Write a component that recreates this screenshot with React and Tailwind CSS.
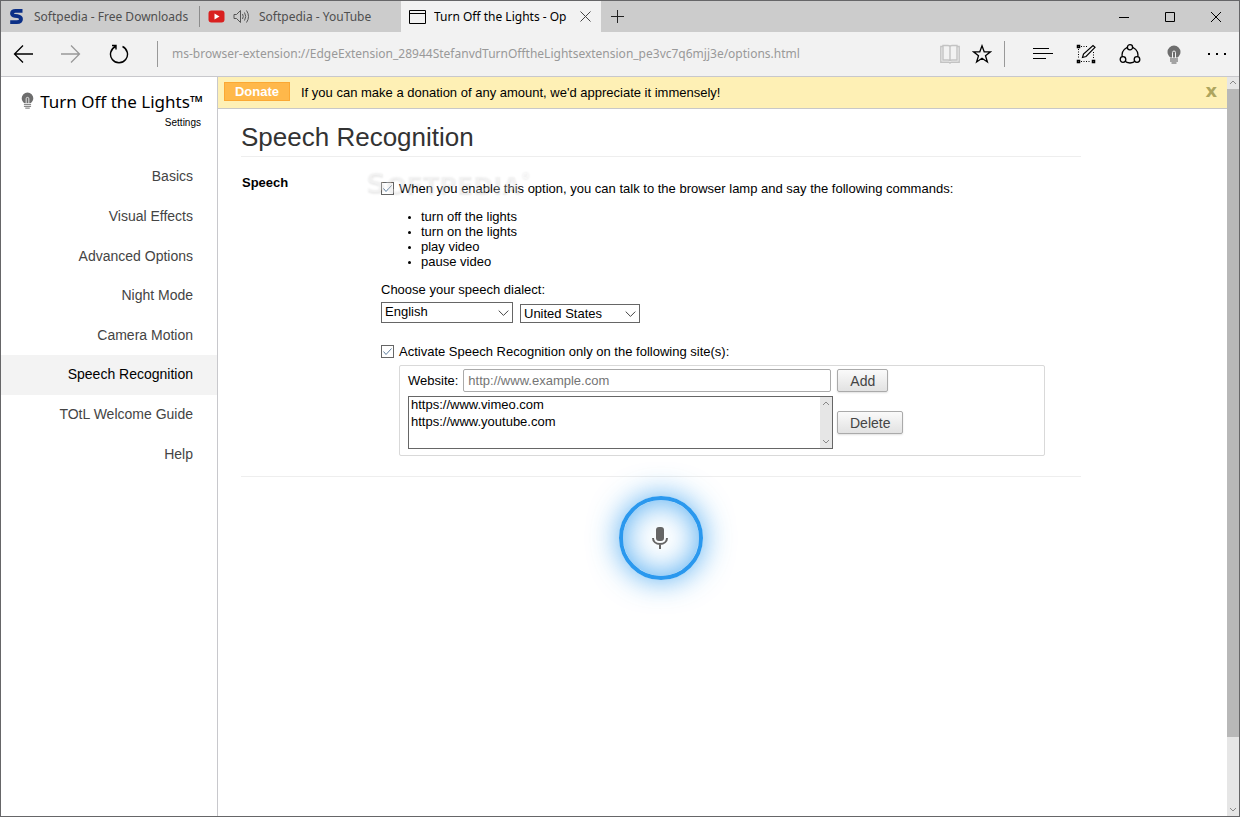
import React, { useState } from "react";

const navItems = [
  "Basics",
  "Visual Effects",
  "Advanced Options",
  "Night Mode",
  "Camera Motion",
  "Speech Recognition",
  "TOtL Welcome Guide",
  "Help",
];

const commands = ["turn off the lights", "turn on the lights", "play video", "pause video"];

function Bulb({ className }) {
  return (
    <svg viewBox="0 0 14 19" className={className} aria-hidden="true">
      <path d="M7 .5a6.5 6.5 0 0 0-6.5 6.5c0 2.300 1.300 4.200 3 5.500h7c1.700-1.300 3-3.200 3-5.500A6.500 6.500 0 0 0 7 .5z" fill="#6e6e6e" />
      <path d="M5.500 13V7.500a1.500 1.500 0 0 1 3 0V13" fill="none" stroke="#f2f2f2" />
      <path d="M3 14h8M3 16h8M4.500 18h5" stroke="#8a8a8a" strokeWidth="1.300" />
    </svg>
  );
}

function Chevron({ up, className }) {
  return (
    <svg viewBox="0 0 8 5" className={className} fill="none" stroke="currentColor" aria-hidden="true">
      <path d={up ? "M1 4l3-3 3 3" : "M1 1l3 3 3-3"} vectorEffect="non-scaling-stroke" />
    </svg>
  );
}

// Tab strip with the window controls on the right
function TabStrip() {
  return (
    <div className="flex h-[31px] shrink-0 bg-[#cccccc] text-[12px] text-[#4f4f4f]">
      <div className="flex w-[198px] items-center pl-2">
        <svg width="15" height="17" viewBox="0 0 15 17" className="mr-[10px] shrink-0">
          <path d="M13.500 2.800H6.500C4 2.800 3 3.800 3 5.200c0 1.700 1.100 2.300 3 2.600l2.500.4c2.200.4 3.500 1 3.500 2.800 0 2.200-1.600 3.200-4.200 3.200H1.200" fill="none" stroke="#0b2f86" strokeWidth="3.800" />
        </svg>
        <span className="w-[158px] overflow-hidden whitespace-nowrap">Softpedia - Free Downloads</span>
      </div>
      <div className="my-[5px] w-px bg-[#8c8c8c]" />
      <div className="flex w-[201px] items-center pl-2">
        <svg width="17" height="13" viewBox="0 0 17 13" className="mr-2 shrink-0">
          <rect x=".5" y=".5" width="16" height="12" rx="3" fill="#d9201f" />
          <path d="M6.500 3.500v6l5-3z" fill="#fff" />
        </svg>
        <svg width="18" height="15" viewBox="0 0 18 15" className="mr-2 shrink-0" fill="none" stroke="#555">
          <path d="M1 5.500h2.500l4-4v12l-4-4H1zM9.500 5q1.500 2.500 0 5M11.500 3.500q2.500 4 0 8M13.500 1.500q4 6 0 12" />
        </svg>
        <span className="whitespace-nowrap">Softpedia - YouTube</span>
      </div>
      <div className="flex w-[200px] items-center bg-[#f2f2f2] pl-2 text-black">
        <svg width="17" height="14" viewBox="0 0 17 14" className="mr-2 shrink-0" fill="none" stroke="#000">
          <path d="M1 .5h15.500v13H.5V.5zM.5 3.500h16" />
        </svg>
        <span className="w-[136px] overflow-hidden whitespace-nowrap">Turn Off the Lights - Op</span>
        <button aria-label="Close tab" className="ml-[10px]">
          <svg width="11" height="11" viewBox="0 0 11 11" stroke="#444">
            <path d="M.5.5l10 10M10.500.5l-10 10" />
          </svg>
        </button>
      </div>
      <button aria-label="New tab" className="ml-[10px]">
        <svg width="13" height="13" viewBox="0 0 13 13" stroke="#222">
          <path d="M6.500 0v13M0 6.500h13" />
        </svg>
      </button>
      <div className="ml-auto flex items-center gap-9 pr-[18px]">
        <button aria-label="Minimize">
          <svg width="10" height="10" viewBox="0 0 10 10" stroke="#000"><path d="M0 5.500h10" /></svg>
        </button>
        <button aria-label="Maximize">
          <svg width="10" height="10" viewBox="0 0 10 10" stroke="#000" fill="none"><path d="M.5.5h9v9h-9z" /></svg>
        </button>
        <button aria-label="Close">
          <svg width="10" height="10" viewBox="0 0 10 10" stroke="#000"><path d="M0 0l10 10M10 0L0 10" /></svg>
        </button>
      </div>
    </div>
  );
}

function Toolbar() {
  return (
    <div className="flex h-[45px] shrink-0 items-center border-b border-[#c8c8cc] bg-[#f2f2f2] pl-3">
      <button aria-label="Back" className="mr-7">
        <svg width="20" height="20" viewBox="0 0 20 20" fill="none" stroke="#000" strokeWidth="1.300">
          <path d="M10 1.500L1.500 10l8.500 8.500M1.500 10H20" />
        </svg>
      </button>
      <button aria-label="Forward" className="mr-7">
        <svg width="20" height="20" viewBox="0 0 20 20" fill="none" stroke="#999" strokeWidth="1.300">
          <path d="M10 1.500l8.500 8.500-8.500 8.500M18.500 10H0" />
        </svg>
      </button>
      <button aria-label="Refresh">
        <svg width="20" height="20" viewBox="0 0 20 20" fill="none" stroke="#000" strokeWidth="1.400">
          <path d="M13.500 2.500A8.500 8.500 0 1 1 6.500 2.500M3 1.500h4v4" />
        </svg>
      </button>
      <div className="ml-7 h-[26px] w-px bg-[#999999]" />
      <input
        aria-label="Address"
        defaultValue="ms-browser-extension://EdgeExtension_28944StefanvdTurnOfftheLightsextension_pe3vc7q6mjj3e/options.html"
        className="ml-[14px] min-w-0 flex-1 bg-transparent text-[12px] text-[#999999] outline-none"
      />
      <button aria-label="Reading view">
        <svg width="20" height="20" viewBox="0 0 20 20" fill="none" stroke="#c3c3c3" strokeWidth="1.400">
          <path d="M3 1.500h5q2 0 2 1.500v14q0-1-2-1H3zM17 1.500h-5q-2 0-2 1.500v14q0-1 2-1h5zM3 2.500H.8v15.700H9l1 .8 1-.8h8.200V2.500H17" />
        </svg>
      </button>
      <button aria-label="Add to favorites" className="ml-3">
        <svg width="20" height="20" viewBox="0 0 20 20" fill="none" stroke="#000" strokeWidth="1.300">
          <path d="M10 1.800l2.200 6h6.300l-5 3.900 1.900 6.300L10 14.300 4.600 18l1.900-6.300-5-3.900h6.300z" />
        </svg>
      </button>
      <div className="ml-3 h-[26px] w-px bg-[#999999]" />
      <div className="ml-7 mr-3 flex items-center gap-[23px]">
        <button aria-label="Hub">
          <svg width="20" height="20" viewBox="0 0 20 20" stroke="#000">
            <path d="M0 4.500h16M0 9.500h20M0 14.500h13" />
          </svg>
        </button>
        <button aria-label="Make a web note">
          <svg width="20" height="20" viewBox="0 0 20 20" fill="none" stroke="#000">
            <path d="M5 2.500h7M2.500 5v10M5 17.500h10M17.500 8v7" strokeDasharray="1 1.500" />
            <path d="M1.500 1.500h2v2h-2zM1.500 16.500h2v2h-2zM16.500 16.500h2v2h-2z" strokeWidth="1.500" />
            <path d="M6.500 13.500l1-3.500 9.500-8.500 2 1.800-9 9.200z" strokeWidth="1.200" />
          </svg>
        </button>
        <button aria-label="Share">
          <svg width="22" height="20" viewBox="0 0 22 20" stroke="#000" strokeWidth="1.300" fill="none">
            <circle cx="11" cy="11" r="8" />
            <g fill="#f2f2f2">
              <circle cx="11" cy="3.300" r="2.600" />
              <circle cx="4" cy="15.500" r="2.800" />
              <circle cx="18" cy="15.500" r="2.800" />
            </g>
          </svg>
        </button>
        <button aria-label="Turn Off the Lights" className="px-[3px]">
          <Bulb className="h-[19px] w-[14px]" />
        </button>
        <button aria-label="More">
          <svg width="20" height="20" viewBox="0 0 20 20">
            <path d="M1 9h2v2H1zM9 9h2v2H9zM17 9h2v2h-2z" />
          </svg>
        </button>
      </div>
    </div>
  );
}

function Sidebar() {
  return (
    <aside className="w-[217px] shrink-0 border-r border-[#c8c8cc]">
      <div className="flex justify-end pt-[14px] pr-[14px]">
        <Bulb className="mt-px mr-1.5 h-[17px] w-[13px]" />
        <h2 className="font-['Noto_Sans',sans-serif] text-[17px] leading-[22px] whitespace-nowrap text-black">Turn Off the Lights™</h2>
      </div>
      <p className="pr-4 text-right text-[10px] leading-5 text-black">Settings</p>
      <nav className="mt-6 flex h-[317px] flex-col">
        {navItems.map((item) => (
          <a
            key={item}
            href="#"
            className={
              item === "Speech Recognition"
                ? "flex flex-1 items-center justify-end bg-[#f3f3f3] pr-6 text-[14px] text-black"
                : "flex flex-1 items-center justify-end pr-6 text-[14px] text-[#444444]"
            }
          >
            {item}
          </a>
        ))}
      </nav>
    </aside>
  );
}

function Checkbox({ id, checked, onChange }) {
  return (
    <span className="grid size-[13px] shrink-0">
      <input
        id={id}
        type="checkbox"
        checked={checked}
        onChange={onChange}
        className="col-start-1 row-start-1 size-[13px] appearance-none border border-[#666666] bg-white"
      />
      {checked && (
        <svg viewBox="0 0 13 13" className="pointer-events-none col-start-1 row-start-1" fill="none" stroke="#5f7f9f">
          <path d="M2.500 6.500l2.500 3 5.500-6" />
        </svg>
      )}
    </span>
  );
}

function Dropdown({ label, options, className }) {
  return (
    <span className="grid items-center">
      <select aria-label={label} className={className}>
        {options.map((o) => (
          <option key={o}>{o}</option>
        ))}
      </select>
      <Chevron className="pointer-events-none col-start-1 row-start-1 mr-[3px] h-2 w-[13px] justify-self-end text-[#444]" />
    </span>
  );
}

const buttonClass =
  "h-[23px] rounded-[2px] border border-[#aaaaaa] bg-linear-to-b from-[#fafafa] to-[#e2e2e2] px-3 text-[14px] leading-5 text-[#444444] shadow-[0_1px_2px_rgba(0,0,0,0.12)]";

function SpeechSection() {
  const [enabled, setEnabled] = useState(true);
  const [onlySites, setOnlySites] = useState(true);
  const [website, setWebsite] = useState("");
  const [sites, setSites] = useState(["https://www.vimeo.com", "https://www.youtube.com"]);
  const [selected, setSelected] = useState([]);

  const addSite = () => {
    if (website.trim() !== "") {
      setSites([...sites, website.trim()]);
      setWebsite("");
    }
  };

  const removeSites = () => {
    setSites(sites.filter((s) => !selected.includes(s)));
    setSelected([]);
  };

  return (
    <section className="flex border-b border-[#eeeeee] pt-[18px] pb-5">
      <h3 className="w-[140px] shrink-0 pl-px text-[13px] leading-4 font-bold">Speech</h3>
      <div className="relative min-w-0 flex-1 pt-1.5">
        <div className="flex items-center gap-[5px]">
          <Checkbox id="speech" checked={enabled} onChange={() => setEnabled(!enabled)} />
          <label htmlFor="speech" className="leading-[15px]">
            When you enable this option, you can talk to the browser lamp and say the following commands:
          </label>
        </div>
        {/* Watermark */}
        <span className="pointer-events-none absolute -top-2 -left-4 flex font-['DejaVu_Sans',sans-serif] text-[28px] leading-8 font-bold whitespace-nowrap text-white/30 [text-shadow:1px_2px_2px_rgba(0,0,0,0.08)]">
          <span>S</span>
          <span className="text-[24px] leading-9">OFTPEDIA</span>
          <span className="text-[10px] leading-4">®</span>
        </span>
        <ul className="mt-[13px] list-disc pl-10 leading-[15px] marker:text-[10px]">
          {commands.map((c) => (
            <li key={c}>{c}</li>
          ))}
        </ul>
        <p className="mt-[13px] leading-[15px]">Choose your speech dialect:</p>
        <div className="mt-[5px] flex items-end gap-[7px]">
          <Dropdown
            label="Language"
            options={["English", "Deutsch", "Français"]}
            className="col-start-1 row-start-1 h-[21px] w-[132px] appearance-none border border-[#666666] bg-white pb-0.5 pl-[3px] text-[13px] leading-4"
          />
          <Dropdown
            label="Region"
            options={["United States", "United Kingdom", "Australia"]}
            className="col-start-1 row-start-1 h-[19px] w-[120px] appearance-none border border-[#666666] bg-white pl-[3px] text-[13px] leading-4"
          />
        </div>
        <div className="mt-[21px] flex items-center gap-[5px]">
          <Checkbox id="only" checked={onlySites} onChange={() => setOnlySites(!onlySites)} />
          <label htmlFor="only" className="leading-[15px]">
            Activate Speech Recognition only on the following site(s):
          </label>
        </div>
        <div className="mt-[6px] ml-[18px] max-w-[646px] rounded-[2px] border border-[#d9d9d9] px-2 pt-[3px] pb-1.5">
          <div className="flex items-center">
            <label htmlFor="website" className="mr-[5px]">Website:</label>
            <input
              id="website"
              value={website}
              onChange={(e) => setWebsite(e.target.value)}
              placeholder="http://www.example.com"
              className="mr-1.5 h-[23px] w-[368px] rounded-[2px] border border-[#aaaaaa] bg-white px-1 text-[13px] placeholder-[#757575]"
            />
            <button onClick={addSite} className={buttonClass}>Add</button>
          </div>
          <div className="mt-1 flex items-center">
            <div className="mr-1 flex h-[53px] w-[425px] border border-[#666666]">
              <select
                multiple
                aria-label="Sites"
                value={selected}
                onChange={(e) => setSelected([...e.target.selectedOptions].map((o) => o.value))}
                className="min-w-0 flex-1 overflow-hidden bg-white text-[13px]"
              >
                {sites.map((s) => (
                  <option key={s} value={s} className="h-[17px] p-0 pl-0.5 leading-[17px]">{s}</option>
                ))}
              </select>
              <div className="flex w-3 flex-col items-center justify-between bg-[#e6e6e6] py-1 text-[#888]">
                <Chevron up className="h-[5px] w-2" />
                <Chevron className="h-[5px] w-2" />
              </div>
            </div>
            <button onClick={removeSites} className={buttonClass}>Delete</button>
          </div>
        </div>
      </div>
    </section>
  );
}

function App() {
  return (
    <div className="flex min-h-screen flex-col border border-[#666668] bg-white font-['Liberation_Sans',Arial,sans-serif] text-[13px] text-black">
      <header className="font-['Noto_Sans','Open_Sans',sans-serif]">
        <TabStrip />
        <Toolbar />
      </header>
      <div className="flex flex-1">
        <Sidebar />
        <div className="min-w-0 flex-1">
          <div className="flex h-8 items-center border-b border-[#c8c8c8] bg-[#fef0b5] pr-2 pl-1.5">
            <button className="mb-0.5 h-[19px] w-[66px] border border-[#fba834] bg-[#ffb84a] text-[13px] leading-4 font-bold text-white">Donate</button>
            <span className="ml-[11px]">If you can make a donation of any amount, we'd appreciate it immensely!</span>
            <button aria-label="Dismiss" className="mb-1 ml-auto px-0.5 font-['DejaVu_Sans',sans-serif] text-[18px] leading-5 font-bold text-[#aea55e]">x</button>
          </div>
          <main className="max-w-[863px] pl-[23px]">
            <h1 className="border-b border-[#eeeeee] pt-[13px] pb-1 text-[26px] leading-[30px] text-[#333333]">Speech Recognition</h1>
            <SpeechSection />
            <div className="flex justify-center pt-[19px]">
              <button
                aria-label="Start speech recognition"
                className="flex size-[84px] items-center justify-center rounded-full border-4 border-[#2a98ee] pr-0.5 shadow-[0_0_30px_rgba(42,152,238,0.8),inset_0_0_30px_rgba(42,152,238,0.8)]"
              >
                <svg width="16" height="24" viewBox="0 0 16 24" aria-hidden="true">
                  <rect x="4" y="1" width="8" height="14" rx="3" fill="#666" />
                  <path d="M1 12c0 3.500 3 6 7 6s7-2.500 7-6M8 18v5" fill="none" stroke="#666" strokeWidth="2" />
                </svg>
              </button>
            </div>
          </main>
        </div>
        {/* Page scrollbar */}
        <div className="flex w-3 shrink-0 flex-col items-center bg-[#e6e6e6] text-[#888]">
          <Chevron up className="my-[3px] h-[5px] w-2" />
          <div className="mt-px w-full flex-[650] bg-[#b8b8b8]" />
          <div className="flex-[66]" />
          <Chevron className="my-1 h-[5px] w-2" />
        </div>
      </div>
    </div>
  );
}

export default App;
